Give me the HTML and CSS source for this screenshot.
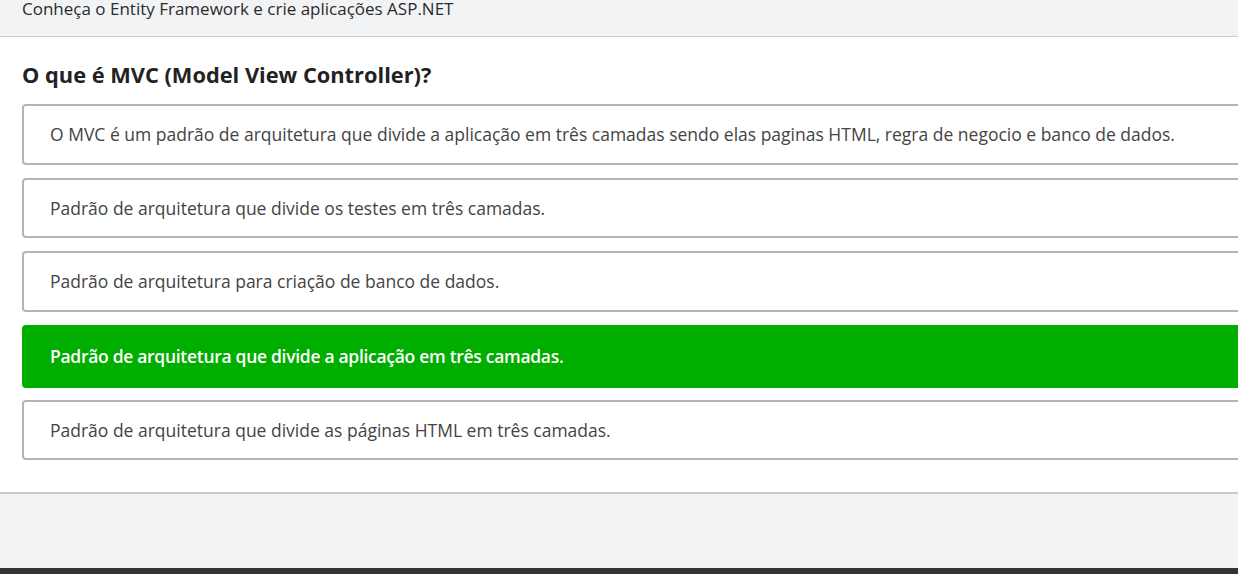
FILE: index.html
```html
<!DOCTYPE html>
<html lang="pt-BR">
<head>
<meta charset="utf-8">
<title>Quiz MVC</title>
<link rel="stylesheet" href="styles.css">
</head>
<body>
<header class="top">
  <p class="course">Conheça o Entity Framework e crie aplicações ASP.NET</p>
</header>
<main class="quiz">
  <h2 class="question">O que é MVC (Model View Controller)?</h2>
  <ul class="options">
    <li class="option">O MVC é um padrão de arquitetura que divide a aplicação em três camadas sendo elas paginas HTML, regra de negocio e banco de dados.</li>
    <li class="option">Padrão de arquitetura que divide os testes em três camadas.</li>
    <li class="option">Padrão de arquitetura para criação de banco de dados.</li>
    <li class="option option-correct">Padrão de arquitetura que divide a aplicação em três camadas.</li>
    <li class="option">Padrão de arquitetura que divide as páginas HTML em três camadas.</li>
  </ul>
</main>
<section class="after"></section>
<footer class="bottom"></footer>
</body>
</html>
```
FILE: styles.css
```css
* { box-sizing: border-box; }
html, body { margin: 0; padding: 0; }
body {
  font-family: "Open Sans", "Noto Sans", sans-serif;
  background: #f2f3f5;
  overflow: hidden;
  height: 574px;
  display: flex;
  flex-direction: column;
}
.top {
  height: 37px;
  background: #f2f3f5;
  border-bottom: 1px solid #c9ced4;
  padding: 0 22px;
}
.course {
  margin: 0;
  font-size: 17px;
  line-height: 18px;
  color: #2b2b2b;
}
.quiz {
  background: #fff;
  padding: 26px 0 32px 22px;
  border-bottom: 2px solid #c9ccd0;
}
.question {
  margin: 0 0 17px;
  font-size: 21.8px;
  line-height: 24px;
  font-weight: 700;
  color: #222;
}
.options {
  list-style: none;
  margin: 0;
  padding: 0;
  width: 1240px;
  display: flex;
  flex-direction: column;
  gap: 13px;
}
.option {
  border: 2px solid #adb5bd;
  border-radius: 4px;
  padding: 16px 26px 16.5px;
  font-size: 17.5px;
  line-height: 24px;
  color: #444;
}
.option-correct {
  background: #00ae00;
  border-color: #00ae00;
  color: #fff;
  font-weight: 600;
  letter-spacing: -0.3px;
  padding: 17.5px 26px 18px;
  margin-bottom: -1.5px;
}
.after {
  flex: 1;
  background: #f2f3f5;
}
.bottom {
  height: 6px;
  background: #333;
}
```
